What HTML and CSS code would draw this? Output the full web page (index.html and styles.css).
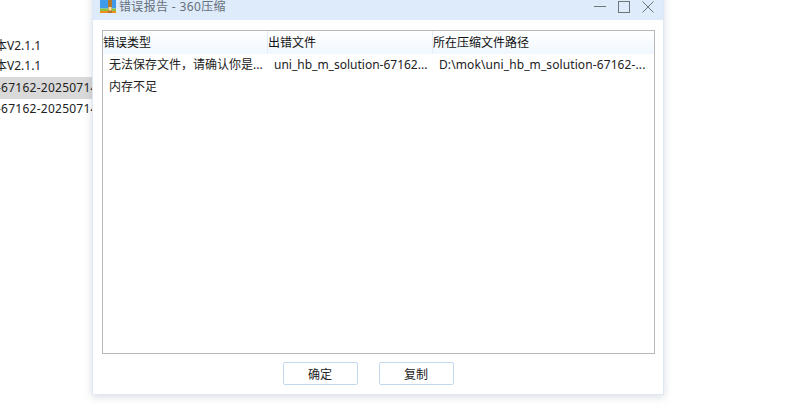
FILE: index.html
```html
<!DOCTYPE html>
<html lang="zh">
<head>
<meta charset="utf-8">
<title>错误报告 - 360压缩</title>
<link rel="stylesheet" href="styles.css">
</head>
<body>
<div class="desktop">
  <ul class="files">
    <li class="file"><span class="ver">本V2.1.1</span></li>
    <li class="file"><span class="ver">本V2.1.1</span></li>
    <li class="file selected"><span class="num">-67162-20250714</span></li>
    <li class="file"><span class="num">-67162-20250714</span></li>
  </ul>
  <section class="window">
    <header class="titlebar">
      <svg class="appicon" viewBox="0 0 16 16" width="16" height="16">
        <rect x="0" y="0" width="16" height="9.5" fill="#3f9bea"/>
        <rect x="0" y="9.5" width="16" height="2.5" fill="#8cc63f"/>
        <rect x="0" y="12" width="16" height="2" fill="#f28a1e"/>
        <rect x="8" y="0" width="4" height="14" fill="#b5792c"/>
        <rect x="8.5" y="8" width="3" height="3.5" fill="#f7e3a5"/>
      </svg>
      <span class="title">错误报告 - 360压缩</span>
      <div class="controls">
        <svg width="12" height="12" viewBox="0 0 12 12"><path d="M0 5.5H12" stroke="#6f7477" fill="none"/></svg>
        <svg width="12" height="12" viewBox="0 0 12 12"><rect x=".5" y=".5" width="11" height="11" stroke="#6f7477" fill="none"/></svg>
        <svg width="12" height="12" viewBox="0 0 12 12"><path d="M.5.5L11.5 11.5M11.5.5L.5 11.5" stroke="#6f7477" fill="none"/></svg>
      </div>
    </header>
    <div class="body">
      <div class="list">
        <div class="head">
          <div class="hcell c1">错误类型</div>
          <div class="hcell c2">出错文件</div>
          <div class="hcell c3">所在压缩文件路径</div>
        </div>
        <div class="row">
          <div class="cell c1">无法保存文件，请确认你是...</div>
          <div class="cell c2">uni_hb_m_solution-67162...</div>
          <div class="cell c3 path">D:\mok\uni_hb_m_solution-67162-...</div>
        </div>
        <div class="row"><div class="cell c1">内存不足</div></div>
      </div>
      <div class="actions">
        <button class="btn">确定</button>
        <button class="btn">复制</button>
      </div>
    </div>
  </section>
</div>
</body>
</html>
```
FILE: styles.css
```css
* { box-sizing: border-box; }
html, body { margin: 0; padding: 0; background: #fff; }
body { font-family: "Noto Sans", "Noto Sans CJK SC", sans-serif; font-size: 12px; color: #1a1a1a; }
.desktop { position: relative; width: 785px; height: 418px; overflow: hidden; background: #fff; }
.files { list-style: none; margin: 0; padding: 36px 0 0; width: 92px; overflow: hidden; }
.file { height: 20px; line-height: 20px; white-space: nowrap; display: flex; color: #222; font-size: 12px; }
.file span { flex: none; }
.ver { margin-left: -5px; }
.num { margin-left: -3px; letter-spacing: .25px; }
.selected { background: #d9d9d9; height: 22px; line-height: 22px; margin-top: 1px; }
.window { position: absolute; left: 92px; top: -10px; width: 572px; height: 405px; background: #fff; border: 1px solid #dfe9f5; border-top: 0; box-shadow: 0 2px 8px rgba(120,130,150,.28); display: flex; flex-direction: column; }
.titlebar { height: 30px; background: #deebfb; flex: none; display: flex; align-items: center; padding: 10px 9px 0 7px; }
.appicon { flex: none; margin-top: -7px; }
.title { margin-left: 3px; margin-top: -9px; font-size: 12px; color: #66707a; letter-spacing: .35px; }
.controls { margin-left: auto; margin-top: -7px; display: flex; gap: 12px; }
.body { flex: 1; display: flex; flex-direction: column; padding: 10px 8px 0 9px; }
.list { height: 324px; border: 1px solid #b9b9b9; display: flex; flex-direction: column; background: #fff; flex: none; }
.head { display: flex; height: 23px; background: linear-gradient(#fff, #f0f7fe); flex: none; }
.hcell { line-height: 23px; border-right: 1px solid #e3eefa; color: #111; white-space: nowrap; }
.row { display: flex; height: 22px; line-height: 22px; flex: none; }
.cell { padding-left: 6px; white-space: nowrap; overflow: hidden; color: #222; }
.c1 { width: 165px; }
.c2 { width: 165px; }
.c3 { flex: 1; border-right: 0; }
.path { letter-spacing: .1px; }
.actions { display: flex; justify-content: center; gap: 21px; padding-top: 8px; padding-right: 21px; }
.btn { width: 75px; height: 23px; background: #fff; border: 1px solid #c3d9f0; border-radius: 2px; font: inherit; color: #222; padding: 0; }
```
